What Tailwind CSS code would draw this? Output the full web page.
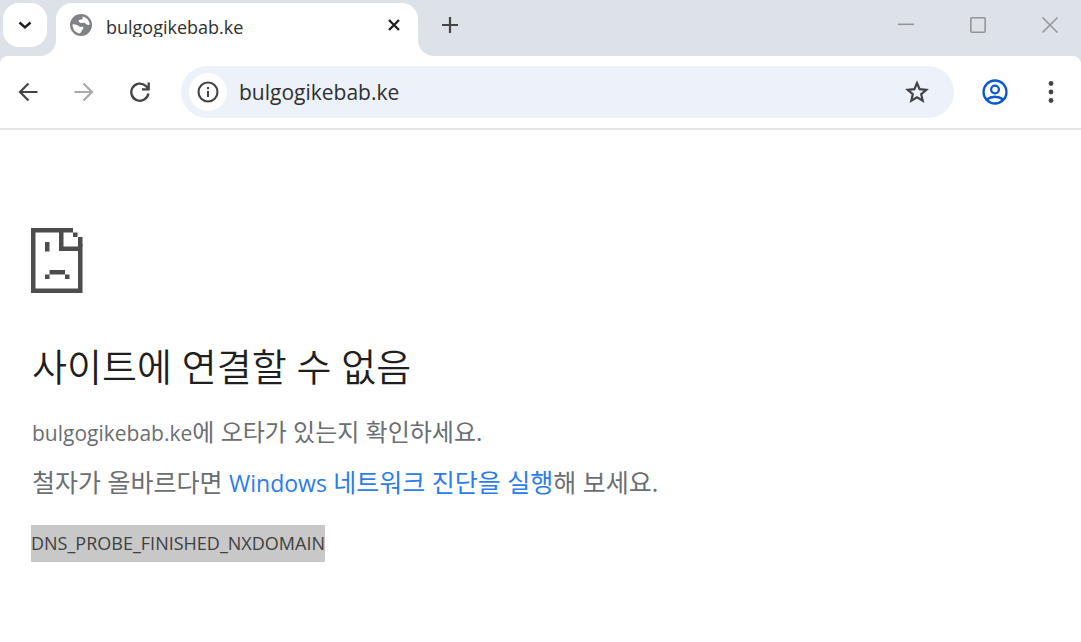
<!DOCTYPE html>
<html lang="ko">
<head>
<meta charset="utf-8">
<meta name="viewport" content="width=device-width, initial-scale=1">
<title>bulgogikebab.ke</title>
<script src="https://cdn.jsdelivr.net/npm/@tailwindcss/browser@4"></script>
</head>
<body class="min-h-screen bg-white font-['Open_Sans','Noto_Sans_CJK_KR',sans-serif] text-[#303030]">
<header class="border-b-2 border-[#e6e6e6]">
  <div class="flex h-14 bg-white">
    <div class="w-14 shrink-0 rounded-br-2xl bg-[#dde1e8] pt-[3px] pl-[3px]">
      <button aria-label="탭 검색" class="flex h-11 w-11 items-center justify-center rounded-2xl bg-white text-[#1f1f1f]">
        <svg class="h-4 w-4" viewBox="0 0 16 16" fill="none" stroke="currentColor" stroke-width="2.4"><path d="M2.500 5.500 8 10.500l5.500-5"/></svg>
      </button>
    </div>
    <div class="w-[362px] bg-linear-to-b from-[#dde1e8] from-50% to-white to-50% pt-[3px]">
      <div class="flex h-full items-start rounded-t-2xl bg-white pt-[10px] pr-3 pl-[13px]">
        <svg class="h-6 w-6 shrink-0" viewBox="0 0 24 24" fill="#808285"><path fill-rule="evenodd" d="M12 1a11 11 0 1 0 0 22 11 11 0 0 0 0-22ZM3.500 11.300c2 0 3.600.3 5.100.9 1.200.5 1.500 1.600 2.700 1.600h2.200c1 0 1.300.8.8 1.600l-1.300 1.900c-.5.700-.3 1.500-1.100 2.100l-1.700 1.100A8.700 8.700 0 0 1 3.500 11.300ZM13.500 3.500a8.700 8.700 0 0 1 7.200 8.100c-1.200.6-2.300.4-3.300-.3l-1.600-1.200c-.8-.6-1.700-.2-2.600-.2-1.500 0-2.900-.4-3.500-1.500-.4-.9.200-1.600 1.200-1.700 1.300-.2 2.500.1 2.800-1.200Z"/></svg>
        <span class="ml-[13px] h-6 flex-1 overflow-hidden text-[18px] leading-7">bulgogikebab.ke</span>
        <button aria-label="탭 닫기" class="flex h-6 w-6 items-center justify-center text-[#1f1f1f]">
          <svg class="h-3 w-3" viewBox="0 0 12 12" fill="none" stroke="currentColor" stroke-width="2.300"><path d="m1 1 10 10M11 1 1 11"/></svg>
        </button>
      </div>
    </div>
    <div class="flex flex-1 justify-between rounded-bl-2xl bg-[#dde1e8] pt-[9px] pr-[15px] pl-4">
      <button aria-label="새 탭" class="flex h-8 w-8 items-center justify-center text-[#444]">
        <svg class="h-4 w-4" viewBox="0 0 16 16" fill="none" stroke="currentColor" stroke-width="2.200"><path d="M8 0v16M0 8h16"/></svg>
      </button>
      <div class="flex gap-10 text-[#929497]">
        <button aria-label="최소화" class="flex h-8 w-8 items-center justify-center"><svg class="h-4 w-4" viewBox="0 0 16 16" fill="none" stroke="currentColor" stroke-width="1.500"><path d="M0 7.300h16"/></svg></button>
        <button aria-label="최대화" class="flex h-8 w-8 items-center justify-center"><svg class="h-4 w-4" viewBox="0 0 16 16" fill="none" stroke="currentColor" stroke-width="1.600"><rect x=".8" y=".8" width="14.400" height="14.400" rx="1.200"/></svg></button>
        <button aria-label="닫기" class="flex h-8 w-8 items-center justify-center"><svg class="h-4 w-4" viewBox="0 0 16 16" fill="none" stroke="currentColor" stroke-width="1.500"><path d="m.5.5 15 15M15.500.5l-15 15"/></svg></button>
      </div>
    </div>
  </div>
  <div class="bg-[#dde1e8]">
    <div class="flex h-[72px] items-center rounded-t-lg bg-white pr-[14px] pl-3 text-[#444]">
      <nav class="flex gap-6">
        <button aria-label="뒤로" class="flex h-8 w-8 items-center justify-center"><svg class="h-5 w-5" viewBox="0 0 20 20" fill="none" stroke="currentColor" stroke-width="2.200"><path d="M19.500 10H2M10.500 1.500 2 10l8.500 8.500"/></svg></button>
        <button aria-label="앞으로" disabled class="flex h-8 w-8 items-center justify-center text-[#aaa]"><svg class="h-5 w-5" viewBox="0 0 20 20" fill="none" stroke="currentColor" stroke-width="2.200"><path d="M.5 10H18M9.500 1.500 18 10l-8.500 8.500"/></svg></button>
        <button aria-label="새로고침" class="flex h-8 w-8 items-center justify-center"><svg class="h-5 w-5" viewBox="0 0 20 20" fill="none" stroke="currentColor" stroke-width="2.300"><path d="M18.400 11.500A8.600 8.600 0 1 1 15.700 3.800L18.500 7M18.700.5v6.800H12"/></svg></button>
      </nav>
      <div class="ml-[25px] flex h-[52px] flex-1 items-center rounded-full bg-[#edf1fa] pr-[21px] pl-2">
        <button aria-label="사이트 정보 보기" class="flex h-[38px] w-[38px] shrink-0 items-center justify-center rounded-full bg-white">
          <svg class="h-[22px] w-[22px]" viewBox="0 0 22 22" fill="none" stroke="currentColor" stroke-width="2.100"><circle cx="11" cy="11" r="9.500"/><path d="M11 10v6M11 6v2.200"/></svg>
        </button>
        <input aria-label="주소창" type="text" value="bulgogikebab.ke" class="ml-3 min-w-0 flex-1 bg-transparent text-[21px] leading-8 text-[#303030] outline-none">
        <button aria-label="북마크에 추가" class="flex h-8 w-8 items-center justify-center"><svg class="h-6 w-6" viewBox="0 0 24 24" fill="none" stroke="currentColor" stroke-width="2.200"><path d="m12 3 2.600 6.200 6.700.6-5.100 4.400 1.500 6.500-5.700-3.400-5.700 3.400 1.500-6.500-5.100-4.400 6.700-.6Z"/></svg></button>
      </div>
      <button aria-label="프로필" class="ml-[25px] flex h-8 w-8 items-center justify-center text-[#0b57d0]"><svg class="h-[26px] w-[26px]" viewBox="0 0 26 26" fill="none" stroke="currentColor" stroke-width="2.300"><circle cx="13" cy="13" r="11.500"/><circle cx="13" cy="10.500" r="3.900"/><path d="M4.800 20.500c4.800-3.700 11.600-3.700 16.400 0"/></svg></button>
      <button aria-label="메뉴" class="ml-6 flex h-8 w-8 items-center justify-center"><svg class="h-6 w-6" viewBox="0 0 24 24" fill="currentColor"><circle cx="12" cy="3.500" r="2.400"/><circle cx="12" cy="12" r="2.400"/><circle cx="12" cy="20.500" r="2.400"/></svg></button>
    </div>
  </div>
</header>
<main class="px-8 pt-24 pb-16 text-[#6b6e72]">
  <svg class="-ml-px h-[68px] w-[52px]" viewBox="0 0 52 68" fill="#4d4d4d" aria-hidden="true">
    <path d="M0 2h42v4.500h-9.500v14H47v-2.500h4.500v49H0ZM4.500 6.500v56H47V25H28V6.500Z"/>
    <path d="M47 11h4.500v9.500H47ZM42 6.500h4.500V11H42ZM14 16h4.500v9.500H14ZM18.500 44H34v4.500H18.500ZM14 48.500h4.500V53H14ZM34 48.500h4.500V53H34Z"/>
  </svg>
  <h1 class="mt-11 text-[38px] leading-14 font-[350] text-[#1f1f1f]">사이트에 연결할 수 없음</h1>
  <p class="mt-5 text-2xl leading-9"><span class="text-[21px]">bulgogikebab.ke</span>에 오타가 있는지 확인하세요.</p>
  <p class="mt-[13px] text-[25px] leading-9">철자가 올바르다면 <a href="#" class="text-[#2b7cee]"><span class="text-[23px]">Windows</span> 네트워크 진단을 실행</a>해 보세요.</p>
  <div class="mt-6 -ml-px w-fit bg-[#c8c8c8] text-[18px] leading-[37px] text-[#404040]">DNS_PROBE_FINISHED_NXDOMAIN</div>
</main>
</body>
</html>
